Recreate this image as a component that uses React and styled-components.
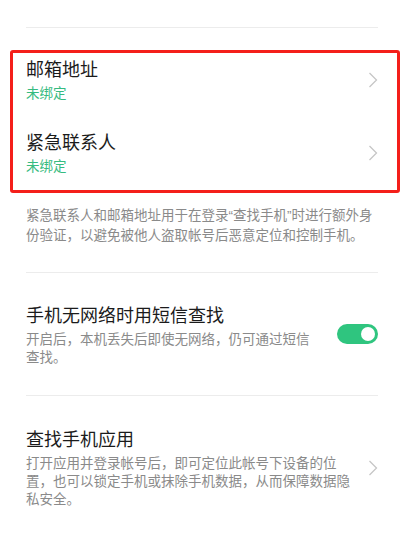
import React from "react";
import styled, { createGlobalStyle } from "styled-components";

const GlobalStyle = createGlobalStyle`
  html, body {
    margin: 0;
    padding: 0;
    background: #fff;
  }
  body {
    font-family: "Liberation Sans", "Noto Sans CJK SC", sans-serif;
    -webkit-font-smoothing: antialiased;
  }
`;

const Page = styled.div`
  width: 401px;
  box-sizing: border-box;
  padding: 27px 23px 0 26px;
  background: #fff;
`;

const Divider = styled.div`
  height: 1px;
  background: #ececec;
  margin-bottom: ${(p) => p.$after || 0}px;
`;

const Highlight = styled.div`
  margin: 0 -22px 0 -16px;
  padding: 4.5px 19px 14px 13px;
  border: 3px solid #f41f1a;
  border-radius: 3px;
  display: flex;
  flex-direction: column;
  gap: 27.5px;
`;

const Row = styled.div`
  display: flex;
  align-items: center;
  gap: ${(p) => p.$gap || 12}px;
`;

const TextCol = styled.div`
  flex: 1;
  min-width: 0;
  display: flex;
  flex-direction: column;
`;

const Title = styled.div`
  font-size: 18px;
  line-height: 24px;
  color: #1b1b1b;
`;

const Sub = styled.div`
  margin-top: 3.5px;
  font-size: 13.5px;
  line-height: ${(p) => p.$lh || 18}px;
  color: ${(p) => (p.$green ? "#36bb80" : "#8a8a8a")};
`;

const Note = styled.p`
  margin: 13px 0 26px;
  font-size: 13.5px;
  line-height: 20px;
  color: #8a8a8a;
`;

const Section = styled.div`
  padding: ${(p) => p.$top}px 0 ${(p) => p.$bottom}px;
`;

const Toggle = styled.div`
  flex: none;
  width: 41px;
  height: 20px;
  border-radius: 10px;
  background: #2fc57f;
  display: flex;
  align-items: center;
  justify-content: flex-end;
  padding: 0 3px;
  box-sizing: border-box;
  margin-top: -2px;
`;

const Knob = styled.div`
  width: 14px;
  height: 14px;
  border-radius: 50%;
  background: #fff;
`;

const Chevron = () => (
  <svg width="10" height="16" viewBox="0 0 10 16" style={{ flex: "none" }}>
    <polyline
      points="1.5,1 8.5,8 1.5,15"
      fill="none"
      stroke="#c6c6c6"
      strokeWidth="1.3"
      strokeLinejoin="miter"
    />
  </svg>
);

function LinkRow({ title, status }) {
  return (
    <Row $gap={12}>
      <TextCol>
        <Title>{title}</Title>
        <Sub $green>{status}</Sub>
      </TextCol>
      <Chevron />
    </Row>
  );
}

export default function App() {
  return (
    <>
      <GlobalStyle />
      <Page>
        <Divider $after={22} />
        <Highlight>
          <LinkRow title="邮箱地址" status="未绑定" />
          <LinkRow title="紧急联系人" status="未绑定" />
        </Highlight>
        <Note>
          紧急联系人和邮箱地址用于在登录“查找手机”时进行额外身份验证，以避免被他人盗取帐号后恶意定位和控制手机。
        </Note>
        <Divider />
        <Section $top={30.5} $bottom={28}>
          <Row $gap={21}>
            <TextCol>
              <Title>手机无网络时用短信查找</Title>
              <Sub>开启后，本机丢失后即使无网络，仍可通过短信查找。</Sub>
            </TextCol>
            <Toggle>
              <Knob />
            </Toggle>
          </Row>
        </Section>
        <Divider />
        <Section $top={31.5} $bottom={20}>
          <Row $gap={13}>
            <TextCol>
              <Title>查找手机应用</Title>
              <Sub>
                打开应用并登录帐号后，即可定位此帐号下设备的位置，也可以锁定手机或抹除手机数据，从而保障数据隐私安全。
              </Sub>
            </TextCol>
            <Chevron />
          </Row>
        </Section>
      </Page>
    </>
  );
}
